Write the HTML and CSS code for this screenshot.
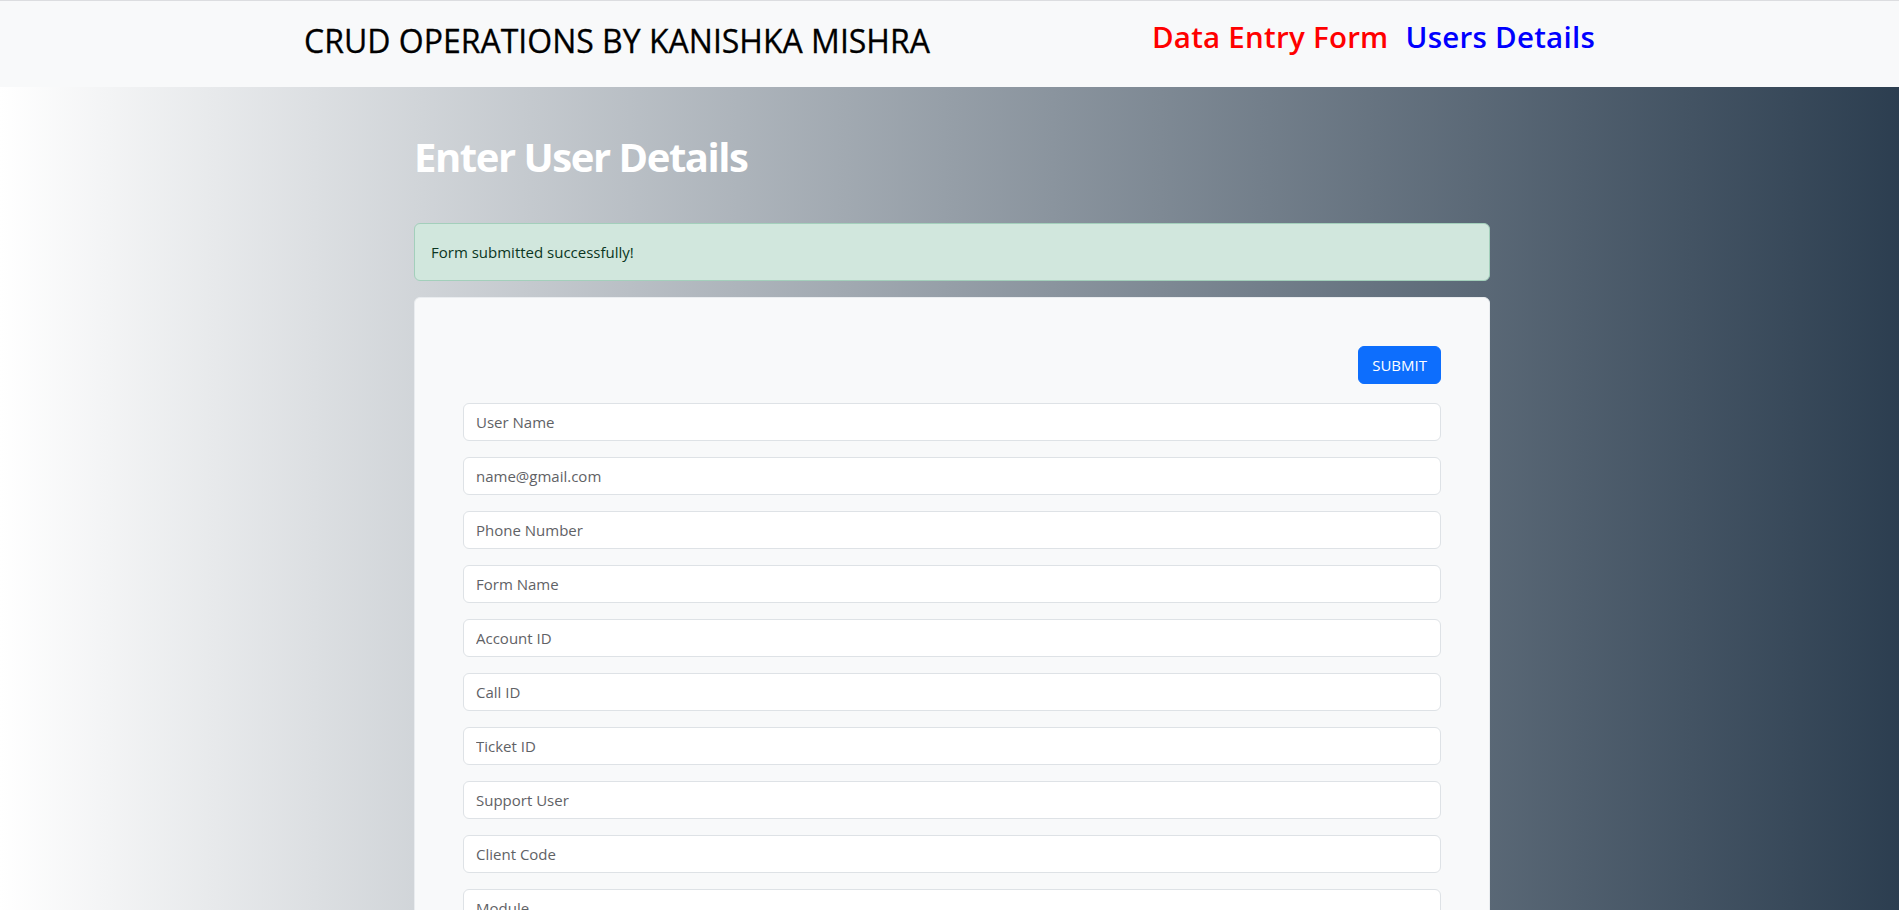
FILE: index.html
```html
<!DOCTYPE html>
<html lang="en">
<head>
<meta charset="utf-8">
<title>CRUD Operations</title>
<link rel="stylesheet" href="styles.css">
</head>
<body>
<header class="topbar">
  <h2 class="brand">CRUD OPERATIONS BY KANISHKA MISHRA</h2>
  <nav class="nav">
    <a class="nav-link red" href="#">Data Entry Form</a>
    <a class="nav-link blue" href="#">Users Details</a>
  </nav>
</header>
<main class="page">
  <div class="wrap">
    <h1 class="heading">Enter User Details</h1>
    <div class="alert">Form submitted successfully!</div>
    <form class="card">
      <div class="actions"><button type="button" class="btn">SUBMIT</button></div>
      <input class="field" type="text" placeholder="User Name">
      <input class="field" type="text" placeholder="name@gmail.com">
      <input class="field" type="text" placeholder="Phone Number">
      <input class="field" type="text" placeholder="Form Name">
      <input class="field" type="text" placeholder="Account ID">
      <input class="field" type="text" placeholder="Call ID">
      <input class="field" type="text" placeholder="Ticket ID">
      <input class="field" type="text" placeholder="Support User">
      <input class="field" type="text" placeholder="Client Code">
      <input class="field" type="text" placeholder="Module">
    </form>
  </div>
</main>
</body>
</html>
```
FILE: styles.css
```css
* { box-sizing: border-box; }
html, body { margin: 0; padding: 0; }
body {
  font-family: "Open Sans", "Noto Sans", sans-serif;
  font-size: 16px;
  line-height: 1.5;
  color: #212529;
  background: linear-gradient(to right, #ffffff, #2c3e50);
  min-height: 100vh;
  overflow: hidden;
}
.topbar {
  height: 87px;
  background: #f8f9fa;
  border-top: 1px solid #dcdde0;
  display: flex;
  align-items: flex-start;
  padding-left: 304px;
}
.brand {
  margin: 20px 0 0 0;
  font-size: 32px;
  font-weight: 500;
  line-height: 40px;
  color: #000;
  letter-spacing: 0;
  -webkit-text-stroke: 0.3px #000;
}
.nav {
  display: flex;
  gap: 17px;
  margin-left: 222px;
  margin-top: 16px;
}
.nav-link {
  font-size: 29.5px;
  line-height: 40px;
  font-weight: 600;
  text-decoration: none;
  letter-spacing: 0.25px;
}
.red { color: #ff0000; }
.blue { color: #0000ff; }
.page {
  display: flex;
  justify-content: center;
  padding-left: 5px;
}
.wrap {
  width: 1076px;
}
.heading {
  margin: 46px 0 42px 0;
  font-size: 40px;
  line-height: 48px;
  font-weight: 700;
  color: #fff;
  letter-spacing: -1.45px;
}
.alert {
  background: #d1e7dd;
  border: 1px solid #a3cfbb;
  color: #0a3622;
  border-radius: 6px;
  padding: 16px;
  margin-bottom: 16px;
  font-size: 15px;
  line-height: 24px;
}
.card {
  background: #f8f9fa;
  border: 1px solid #e9ecef;
  border-radius: 6px;
  padding: 48px;
  display: flex;
  flex-direction: column;
}
.actions {
  display: flex;
  justify-content: flex-end;
  margin-bottom: 19px;
}
.btn {
  background: #0d6efd;
  color: #fff;
  border: 1px solid #0d6efd;
  border-radius: 6px;
  height: 38px;
  padding: 0 13px;
  font-family: inherit;
  font-size: 15px;
  line-height: 24px;
  cursor: pointer;
}
.field {
  display: block;
  width: 100%;
  height: 38px;
  margin-bottom: 16px;
  padding: 6px 12px;
  border: 1px solid #dee2e6;
  border-radius: 6px;
  background: #fff;
  font-family: inherit;
  font-size: 15px;
  color: #212529;
}
.field::placeholder {
  color: #5f6266;
  opacity: 1;
}
```
